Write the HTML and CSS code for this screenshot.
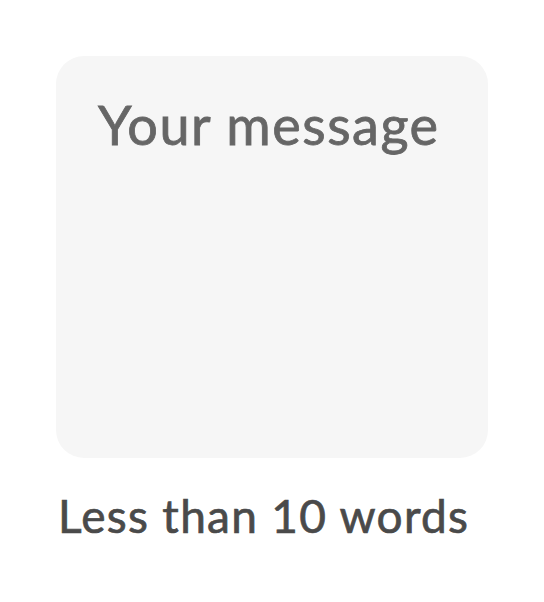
FILE: index.html
```html
<!DOCTYPE html>
<html lang="en">
<head>
<meta charset="utf-8">
<title>Message</title>
<link rel="stylesheet" href="styles.css">
</head>
<body>
<main class="field">
  <textarea class="field__input" placeholder="Your message" aria-label="Your message"></textarea>
  <p class="field__hint">Less than 10 words</p>
</main>
</body>
</html>
```
FILE: styles.css
```css
html, body {
  margin: 0;
  padding: 0;
  background: #ffffff;
}
.field {
  display: flex;
  flex-direction: column;
  padding: 56px 56px 0 56px;
  font-family: "Lato", "Inter", sans-serif;
  font-weight: 400;
}
.field__input {
  box-sizing: border-box;
  width: 432px;
  height: 402px;
  margin: 0;
  padding: 37px 42px;
  border: none;
  border-radius: 28px;
  background: #f6f6f6;
  font-family: inherit;
  font-weight: 400;
  font-size: 54px;
  letter-spacing: 1.5px;
  line-height: 1.2;
  color: #666666;
  -webkit-text-stroke: 0.8px #666666;
  resize: none;
  outline: none;
}
.field__input::placeholder {
  color: #666666;
  opacity: 1;
}
.field__hint {
  margin: 30px 0 0 2px;
  font-size: 46px;
  letter-spacing: 1.3px;
  line-height: 1.2;
  color: #4a4a4a;
  -webkit-text-stroke: 0.7px #4a4a4a;
}
```
